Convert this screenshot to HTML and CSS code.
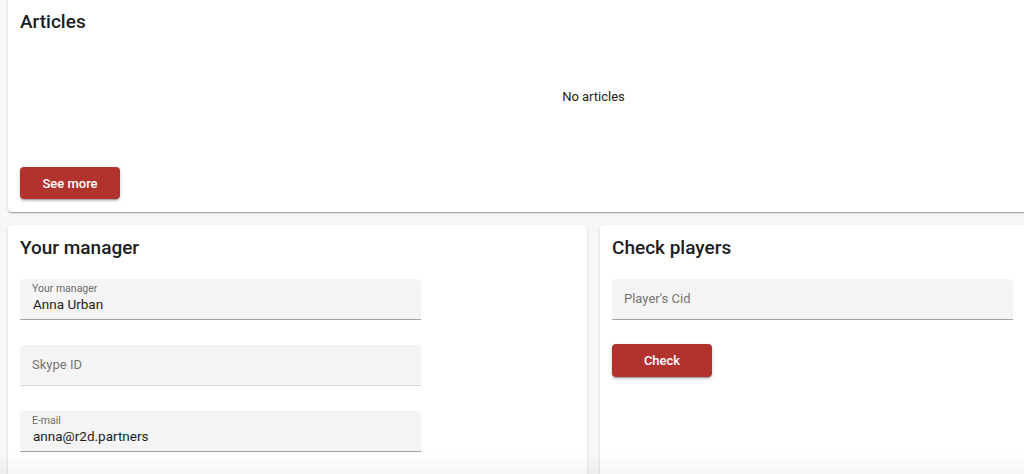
FILE: index.html
```html
<!DOCTYPE html>
<html>
<head>
<meta charset="utf-8">
<link rel="stylesheet" href="styles.css">
</head>
<body>
<div class="page">
  <section class="card articles">
    <h2 class="card-title">Articles</h2>
    <div class="empty">No articles</div>
    <button class="btn">See more</button>
  </section>
  <div class="row">
    <section class="card col">
      <h2 class="card-title">Your manager</h2>
      <div class="fields">
        <div class="field filled">
          <span class="label">Your manager</span>
          <span class="value">Anna Urban</span>
        </div>
        <div class="field">
          <span class="placeholder">Skype ID</span>
        </div>
        <div class="field filled">
          <span class="label">E-mail</span>
          <span class="value">anna@r2d.partners</span>
        </div>
      </div>
    </section>
    <section class="card col">
      <h2 class="card-title">Check players</h2>
      <div class="fields">
        <div class="field filled">
          <span class="placeholder">Player's Cid</span>
        </div>
      </div>
      <button class="btn btn-check">Check</button>
    </section>
  </div>
</div>
<div class="bottom-fade"></div>
</body>
</html>
```

FILE: styles.css
```css
html, body {
  margin: 0;
  padding: 0;
  background: #f7f7f7;
  overflow: hidden;
  font-family: Roboto, "Liberation Sans", Arial, sans-serif;
  color: #1f1f1f;
}
.page {
  width: 1171px;
  padding: 0 8px;
  display: flex;
  flex-direction: column;
  gap: 13px;
}
.card {
  background: #fff;
  border-radius: 4px;
  box-shadow: 0 2px 1px -1px rgba(0,0,0,.2), 0 1px 1px 0 rgba(0,0,0,.14), 0 1px 3px 0 rgba(0,0,0,.12);
  box-sizing: border-box;
}
.articles {
  border-radius: 0 0 4px 4px;
  padding: 10px 12px 13px;
}
.card-title {
  margin: 0;
  font-size: 19px;
  font-weight: 500;
  line-height: 24px;
  color: #1d1d1d;
}
.empty {
  height: 133px;
  box-sizing: border-box;
  padding-top: 53px;
  line-height: 20px;
  font-size: 13px;
  text-align: center;
  color: #222;
}
.btn {
  display: block;
  width: 100px;
  height: 32px;
  border: none;
  border-radius: 4px;
  background: #b2322e;
  color: #fff;
  font-family: Roboto, "Liberation Sans", Arial, sans-serif;
  font-size: 13px;
  font-weight: 500;
  box-shadow: 0 3px 1px -2px rgba(0,0,0,.2), 0 2px 2px 0 rgba(0,0,0,.14), 0 1px 5px 0 rgba(0,0,0,.12);
  padding: 0;
}
.row {
  display: flex;
  gap: 13px;
}
.col {
  flex: 1;
  height: 300px;
  padding: 11px 12px 0;
}
.fields {
  margin-top: 19px;
  display: flex;
  flex-direction: column;
  gap: 25px;
}
.field {
  width: 401px;
  height: 41px;
  box-sizing: border-box;
  background: #f4f4f4;
  border-radius: 4px 4px 0 0;
  border-bottom: 1px solid #d6d6d6;
  padding: 0 12px;
  display: flex;
  flex-direction: column;
  justify-content: center;
}
.field.filled {
  border-bottom-color: #a3a3a3;
}
.label {
  font-size: 10.5px;
  line-height: 13px;
  color: #6b6b6b;
  margin-top: -3px;
}
.value {
  font-size: 13.5px;
  line-height: 18px;
  color: #1d1d1d;
  padding-left: 1px;
}
.placeholder {
  font-size: 13px;
  line-height: 18px;
  color: #747474;
}
.btn-check {
  margin-top: 24px;
  height: 33px;
}
.bottom-fade {
  position: fixed;
  left: 0;
  right: 0;
  bottom: 0;
  height: 24px;
  background: linear-gradient(to bottom, rgba(0,0,0,0), rgba(0,0,0,.035));
  pointer-events: none;
}
```
